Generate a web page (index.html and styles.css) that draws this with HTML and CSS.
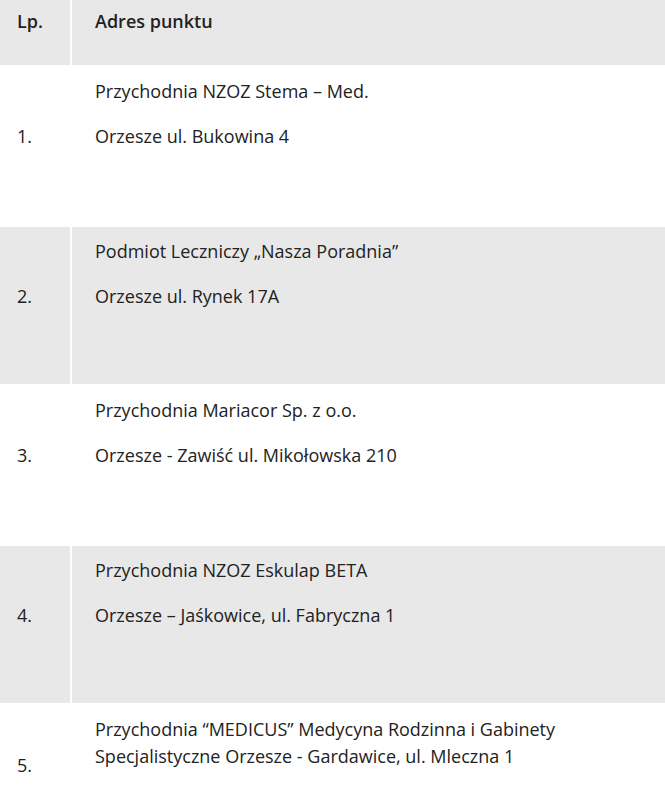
FILE: index.html
```html
<!DOCTYPE html>
<html lang="pl">
<head>
<meta charset="utf-8">
<title>Punkty</title>
<link rel="stylesheet" href="styles.css">
</head>
<body>
<table class="points">
  <colgroup><col class="col-num"><col class="col-addr"></colgroup>
  <thead>
    <tr class="grey">
      <th><p>Lp.</p></th>
      <th><p>Adres punktu</p></th>
    </tr>
  </thead>
  <tbody>
    <tr>
      <td><p>1.</p></td>
      <td><p>Przychodnia NZOZ Stema – Med.</p><p>Orzesze ul. Bukowina 4</p><p>&nbsp;</p></td>
    </tr>
    <tr class="grey">
      <td><p>2.</p></td>
      <td><p>Podmiot Leczniczy „Nasza Poradnia”</p><p>Orzesze ul. Rynek 17A</p><p>&nbsp;</p></td>
    </tr>
    <tr>
      <td><p>3.</p></td>
      <td><p>Przychodnia Mariacor Sp. z o.o.</p><p>Orzesze - Zawiść ul. Mikołowska 210</p><p>&nbsp;</p></td>
    </tr>
    <tr class="grey">
      <td><p>4.</p></td>
      <td><p>Przychodnia NZOZ Eskulap BETA</p><p>Orzesze – Jaśkowice, ul. Fabryczna 1</p><p>&nbsp;</p></td>
    </tr>
    <tr>
      <td><p>5.</p></td>
      <td><p>Przychodnia “MEDICUS” Medycyna Rodzinna i Gabinety Specjalistyczne Orzesze - Gardawice, ul. Mleczna 1</p><p>&nbsp;</p></td>
    </tr>
  </tbody>
</table>
</body>
</html>
```
FILE: styles.css
```css
html, body {
  margin: 0;
  padding: 0;
  background: #fff;
}
body {
  font-family: "Open Sans", "Liberation Sans", sans-serif;
  font-size: 18px;
  line-height: 27px;
  color: #222;
  overflow: hidden;
}
.points {
  width: calc(100% + 4px);
  margin: -6px -2px 0;
  border-collapse: separate;
  border-spacing: 2px;
  table-layout: fixed;
  background: #fff;
}
.col-num { width: 70px; }
.points th,
.points td {
  vertical-align: middle;
  text-align: left;
  padding: 11.25px 23px;
}
.points th:first-child,
.points td:first-child {
  padding-left: 17px;
  padding-right: 6px;
}
.points th {
  font-weight: 600;
  padding-top: 12px;
  padding-bottom: 12px;
}
.points p {
  margin: 0 0 18px;
}
.grey th,
.grey td {
  background: #e8e8e8;
}
```
